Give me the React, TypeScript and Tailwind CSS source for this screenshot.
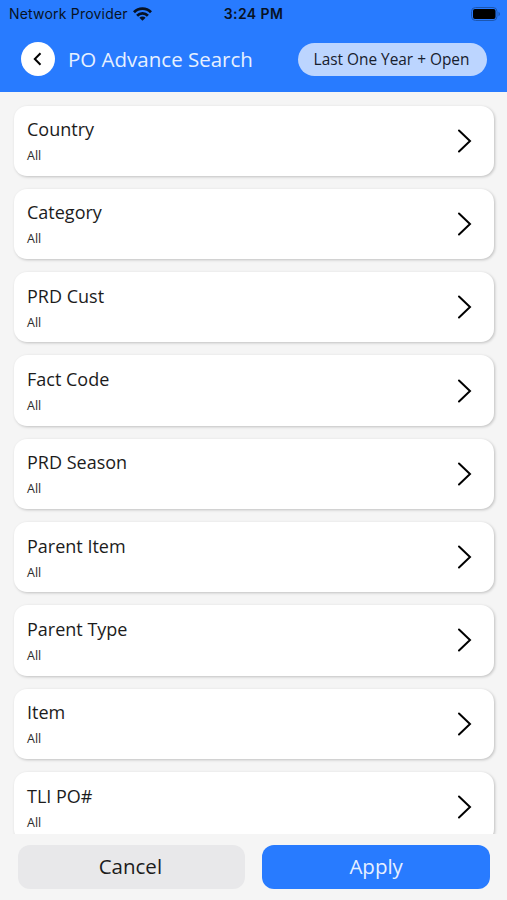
import React from 'react';

const filters = [
  { label: 'Country', value: 'All' },
  { label: 'Category', value: 'All' },
  { label: 'PRD Cust', value: 'All' },
  { label: 'Fact Code', value: 'All' },
  { label: 'PRD Season', value: 'All' },
  { label: 'Parent Item', value: 'All' },
  { label: 'Parent Type', value: 'All' },
  { label: 'Item', value: 'All' },
  { label: 'TLI PO#', value: 'All' },
];

const WifiIcon = () => (
  <svg className="ml-[5px] h-[14px] w-[19px]" viewBox="0 0 19 14" fill="none" stroke="#071224" strokeWidth="2.8">
    <path d="M1 5.2a12 12 0 0 1 17 0" />
    <path d="M4.1 8.7a7.6 7.6 0 0 1 10.8 0" />
    <path d="M9.5 13.8 6.4 10.7a4.4 4.4 0 0 1 6.2 0Z" fill="#071224" stroke="none" />
  </svg>
);

const BatteryIcon = () => (
  <svg className="h-[14px] w-[30px]" viewBox="0 0 30 14">
    <rect x="0.5" y="0.5" width="25.5" height="13" rx="4" fill="none" stroke="#1c56b0" />
    <rect x="2" y="2" width="22.5" height="10" rx="2" fill="#000" />
    <path d="M27.5 4.8c2 .8 2 3.6 0 4.4Z" fill="#1c56b0" />
  </svg>
);

const StatusBar = () => (
  <div className="grid h-[27px] grid-cols-[1fr_auto_1fr] items-center pl-[6px] pr-[6px] font-['Inter',sans-serif] text-[#071224]">
    <div className="flex items-center pl-[3px] text-[14px]">
      <span className="tracking-[0.2px]">Network Provider</span>
      <WifiIcon />
    </div>
    <span className="text-[14px] font-semibold tracking-[0.4px]">3:24 PM</span>
    <div className="flex justify-end">
      <BatteryIcon />
    </div>
  </div>
);

const Header = () => (
  <header className="h-[92px] shrink-0 bg-[#287bff]">
    <StatusBar />
    <div className="flex h-[64px] items-center pl-[21px] pr-[20px]">
      <button className="flex size-[34px] items-center justify-center rounded-full bg-white">
        <svg className="size-[14px]" viewBox="0 0 14 14" fill="none" stroke="#000" strokeWidth="2">
          <path d="M9.5 1.2 3.8 7l5.7 5.8" />
        </svg>
      </button>
      <h1 className="ml-[13px] text-[20.5px] text-[#e6f0ff]">PO Advance Search</h1>
      <button className="ml-auto h-[33px] w-[189px] rounded-full bg-[#bcd5ff] pr-[2px] pt-[1px] text-[15.4px] text-[#17202e]">
        Last One Year + Open
      </button>
    </div>
  </header>
);

interface FilterRowProps {
  label: string;
  value: string;
}

const FilterRow: React.FC<FilterRowProps> = ({ label, value }) => (
  <button className="flex h-[70.3px] w-full shrink-0 items-center justify-between rounded-[13px] bg-white pl-[13px] pr-[22px] text-left shadow-[1px_1px_3px_rgba(0,0,0,0.22)]">
    <div>
      <div className="text-[18px] leading-[26px] text-[#1c1c1c]">{label}</div>
      <div className="mt-[4px] text-[12.5px] leading-[19px] text-[#2b2b2b]">{value}</div>
    </div>
    <svg className="h-6 w-[15px]" viewBox="0 0 15 24" fill="none" stroke="#000" strokeWidth="2" strokeLinecap="round">
      <path d="m2 1.5 11 10.5-11 10.5" />
    </svg>
  </button>
);

const App = () => (
  <div className="flex h-[900px] w-[507px] flex-col overflow-hidden bg-[#f5f5f5] font-['Open_Sans',sans-serif]">
    <Header />
    <main className="flex min-h-0 flex-1 flex-col gap-[13px] overflow-hidden pl-[14px] pr-[13px] pt-[13.5px]">
      {filters.map(filter => (
        <FilterRow key={filter.label} label={filter.label} value={filter.value} />
      ))}
    </main>
    <footer className="grid h-[66px] shrink-0 grid-cols-2 gap-[17px] pl-[17.5px] pr-[17px] pt-[11px] text-[20.5px]">
      <button className="h-11 rounded-[12px] bg-[#e8e8ea] pb-[1px] pr-[2px] text-[#1c1c1c]">Cancel</button>
      <button className="h-11 rounded-[12px] bg-[#287bff] pb-[1px] text-[#e6f0ff]">Apply</button>
    </footer>
  </div>
);

export default App;
